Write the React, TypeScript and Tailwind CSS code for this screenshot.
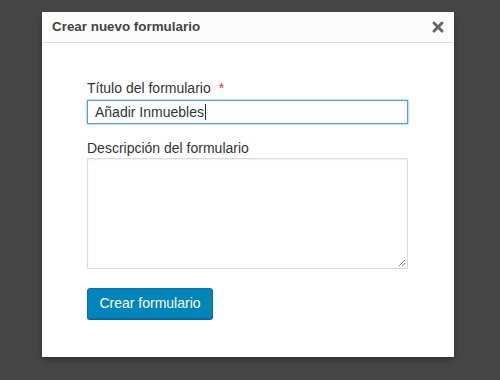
import { X } from 'lucide-react';

export default function App() {
  return (
    <div className="w-[500px] h-[380px] bg-[#464646] pt-[12px] pl-[42px] font-['Liberation_Sans',sans-serif]">

      {/* MODAL */}
      <div className="w-[412px] h-[345px] bg-white shadow-[0_3px_6px_rgba(0,0,0,0.3)] flex flex-col">

        {/* HEADER */}
        <div className="h-[31px] bg-[#fcfcfc] border-b border-[#dddddd] flex items-center justify-between pl-[10px] pr-[8px]">
          <h1 className="text-[13.4px] font-bold text-[#444444]">
            Crear nuevo formulario
          </h1>
          <X size={16} strokeWidth={4.5} className="text-[#666666]" />
        </div>

        {/* FORM */}
        <div className="pl-[45px] pt-[36px]">

          <label className="block text-[14px] text-[#333333] leading-[18px]">
            Título del formulario
            <span className="text-[#dc3232] ml-[8px]">*</span>
          </label>

          <div className="mt-[3px] w-[321px] h-[24px] border border-[#5b9dd9] shadow-[0_0_2px_rgba(30,140,190,0.8)] px-[7px] flex items-center text-[14px] text-[#333333]">
            Añadir Inmuebles
            <span className="w-px h-[16px] bg-[#333333] ml-px" />
          </div>

          <label className="block mt-[15px] text-[14px] text-[#333333] leading-[18px]">
            Descripción del formulario
          </label>

          <div className="relative mt-[1px] w-[321px] h-[111px] border border-[#dddddd] shadow-[inset_0_1px_2px_rgba(0,0,0,0.07)]">
            <svg
              className="absolute right-[1px] bottom-[1px]"
              width="8"
              height="8"
              viewBox="0 0 8 8"
            >
              <path d="M7 1 L1 7 M7 4 L4 7" stroke="#888" strokeWidth="1" />
            </svg>
          </div>

          <button className="mt-[19px] w-[126px] h-[31px] rounded-[3px] bg-[#0085ba] border border-[#0073aa] shadow-[0_1px_0_#006799] text-white text-[14px]">
            Crear formulario
          </button>

        </div>

      </div>

    </div>
  );
}
